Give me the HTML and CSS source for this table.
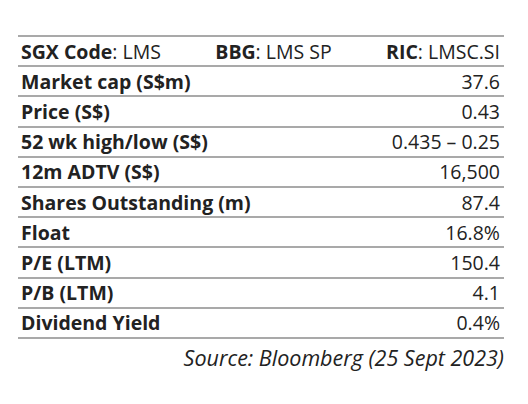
FILE: index.html
```html
<!DOCTYPE html>
<html>
<head>
<meta charset="utf-8">
<link rel="stylesheet" href="styles.css">
</head>
<body>
<div class="card">
  <div class="table">
    <div class="row codes">
      <span><b>SGX Code</b>: LMS</span>
      <span><b>BBG</b>: LMS SP</span>
      <span><b>RIC</b>: LMSC.SI</span>
    </div>
    <div class="row"><span class="label">Market cap (S$m)</span><span class="val">37.6</span></div>
    <div class="row"><span class="label">Price (S$)</span><span class="val">0.43</span></div>
    <div class="row"><span class="label">52 wk high/low (S$)</span><span class="val">0.435 – 0.25</span></div>
    <div class="row"><span class="label">12m ADTV (S$)</span><span class="val">16,500</span></div>
    <div class="row"><span class="label">Shares Outstanding (m)</span><span class="val">87.4</span></div>
    <div class="row"><span class="label">Float</span><span class="val">16.8%</span></div>
    <div class="row"><span class="label">P/E (LTM)</span><span class="val">150.4</span></div>
    <div class="row"><span class="label">P/B (LTM)</span><span class="val">4.1</span></div>
    <div class="row last"><span class="label">Dividend Yield</span><span class="val">0.4%</span></div>
  </div>
  <p class="source">Source: Bloomberg (25 Sept 2023)</p>
</div>
</body>
</html>
```
FILE: styles.css
```css
html, body {
  margin: 0;
  padding: 0;
  background: #ffffff;
}
body {
  font-family: "Open Sans", "Lato", sans-serif;
  color: #222222;
}
.card {
  padding: 35px 24px 0 18px;
}
.table {
  display: flex;
  flex-direction: column;
}
.row {
  display: flex;
  justify-content: space-between;
  align-items: center;
  height: 28.2px;
  padding: 0 4px 0 3px;
  border-top: 2px solid #a9a9a9;
  font-size: 19.5px;
}
.row.last {
  border-bottom: 2px solid #a9a9a9;
}
.label {
  font-weight: 700;
}
.codes b {
  font-weight: 700;
}
.source {
  margin: 4px 0 0 0;
  text-align: right;
  font-style: italic;
  font-size: 21.5px;
  padding-right: 0;
}
```
